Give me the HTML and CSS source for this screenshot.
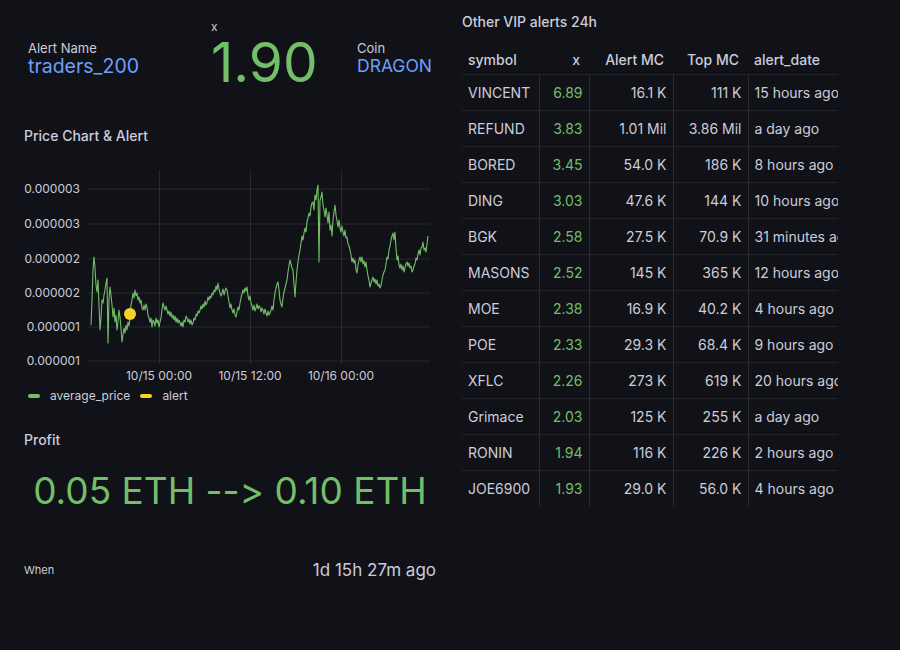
FILE: index.html
```html
<!DOCTYPE html>
<html>
<head>
<meta charset="utf-8">
<link rel="stylesheet" href="styles.css">
</head>
<body>
<div class="page">
  <div class="left">
    <div class="stats">
      <div class="stat stat-name">
        <div class="stat-label">Alert Name</div>
        <div class="stat-value blue">traders_200</div>
      </div>
      <div class="stat stat-x">
        <div class="stat-label small">x</div>
        <div class="stat-big">1.90</div>
      </div>
      <div class="stat stat-coin">
        <div class="stat-label">Coin</div>
        <div class="stat-value blue">DRAGON</div>
      </div>
    </div>

    <div class="panel chart-panel">
      <div class="panel-title">Price Chart &amp; Alert</div>
      <svg class="chart" width="412" height="220" viewBox="24 165 412 220">
        <g class="grid">
          <line x1="88" y1="189" x2="430" y2="189"/>
          <line x1="88" y1="224" x2="430" y2="224"/>
          <line x1="88" y1="259" x2="430" y2="259"/>
          <line x1="88" y1="293" x2="430" y2="293"/>
          <line x1="88" y1="327" x2="430" y2="327"/>
          <line x1="88" y1="361" x2="430" y2="361"/>
          <line x1="159.5" y1="170" x2="159.5" y2="364"/>
          <line x1="250.5" y1="170" x2="250.5" y2="364"/>
          <line x1="341.5" y1="170" x2="341.5" y2="364"/>
        </g>
        <g class="ylab">
          <text x="80" y="193">0.000003</text>
          <text x="80" y="228">0.000003</text>
          <text x="80" y="263">0.000002</text>
          <text x="80" y="297">0.000002</text>
          <text x="80" y="331">0.000001</text>
          <text x="80" y="365">0.000001</text>
        </g>
        <g class="xlab">
          <text x="159" y="380">10/15 00:00</text>
          <text x="250" y="380">10/15 12:00</text>
          <text x="341" y="380">10/16 00:00</text>
        </g>
        <polyline class="price" points="91,325 92,300 93,270 94,257 95,268 96,285 97,292 98,280 99,305 100,330 101,318 102,300 103,303 104,295 105,290 106,283 107,278 108,343 109,300 110,287 111,295 112,305 113,317 114,308 115,322 116,315 117,330 118,322 119,310 120,317 121,328 122,342 123,335 124,328 125,333 126,325 127,330 128,322 129,326 130,318 131,305 132,300 133,293 134,298 135,290 136,296 137,293 138,300 139,297 140,303 141,300 142,308 143,310 144,305 145,310 146,304 147,307 148,315 149,318 150,322 151,318 152,327 153,320 154,322 155,326 156,318 157,323 158,320 159,327 160,322 161,318 162,310 163,303 164,307 165,310 166,306 167,310 168,314 169,311 170,316 171,312 172,318 173,315 174,320 175,316 176,322 177,318 178,323 179,320 180,323 181,326 182,322 183,327 184,320 185,322 186,316 187,318 188,322 189,319 190,324 191,320 192,325 193,323 194,318 195,320 196,314 197,316 198,311 199,313 200,310 201,306 202,309 203,304 204,307 205,301 206,305 207,303 208,297 209,300 210,296 211,298 212,293 213,295 214,290 215,292 216,286 217,290 218,283 219,289 220,293 221,296 222,293 223,289 224,295 225,291 226,288 227,290 228,296 229,302 230,308 231,304 232,310 233,313 234,309 235,315 236,317 237,312 238,307 239,310 240,303 241,298 242,294 243,290 244,293 245,288 246,291 247,287 248,296 249,300 250,296 251,303 252,306 253,310 254,305 255,311 256,308 257,304 258,309 259,306 260,307 261,312 262,308 263,310 264,314 265,309 266,313 267,316 268,311 269,315 270,313 271,310 272,306 273,310 274,300 275,293 276,288 277,284 278,282 279,290 280,300 281,304 282,307 283,298 284,292 285,288 286,284 287,280 288,272 289,266 290,260 291,264 292,268 293,270 294,285 295,297 296,282 297,270 298,262 299,255 300,250 301,243 302,236 303,240 304,233 305,228 306,232 307,222 308,218 309,213 310,216 311,207 312,203 313,202 314,210 315,195 316,200 317,190 318,185 319,262 320,200 321,197 322,192 323,205 324,210 325,217 326,208 327,215 328,223 329,212 330,230 331,225 332,236 333,220 334,212 335,205 336,215 337,221 338,227 339,220 340,228 341,232 342,226 343,232 344,236 345,230 346,238 347,237 348,244 349,246 350,250 351,255 352,262 353,258 354,263 355,260 356,270 357,273 358,265 359,260 360,257 361,262 362,257 363,264 364,261 365,267 366,262 367,270 368,276 369,280 370,287 371,283 372,280 373,277 374,282 375,279 376,284 377,280 378,286 379,284 380,288 381,286 382,280 383,275 384,272 385,270 386,264 387,257 388,259 389,250 390,246 391,240 392,236 393,233 394,240 395,232 396,248 397,260 398,256 399,265 400,268 401,264 402,270 403,266 404,272 405,268 406,264 407,262 408,266 409,263 410,268 411,266 412,272 413,270 414,266 415,264 416,258 417,260 418,254 419,250 420,255 421,248 422,247 423,242 424,250 425,248 426,252 427,244 428,236"/>
        <circle class="alert-dot" cx="130" cy="314" r="6"/>
      </svg>
      <div class="legend">
        <span class="legend-item"><span class="swatch green"></span>average_price</span>
        <span class="legend-item"><span class="swatch yellow"></span>alert</span>
      </div>
    </div>

    <div class="panel profit-panel">
      <div class="panel-title">Profit</div>
      <div class="profit-value">0.05 ETH --&gt; 0.10 ETH</div>
    </div>

    <div class="when-row">
      <span class="when-label">When</span>
      <span class="when-value">1d 15h 27m ago</span>
    </div>
  </div>

  <div class="right">
    <div class="panel-title">Other VIP alerts 24h</div>
    <table class="alerts">
      <colgroup>
        <col class="c-sym"><col class="c-x"><col class="c-amc"><col class="c-tmc"><col class="c-date">
      </colgroup>
      <thead>
        <tr><th class="l">symbol</th><th class="r">x</th><th class="r">Alert MC</th><th class="r">Top MC</th><th class="l">alert_date</th></tr>
      </thead>
      <tbody>
        <tr><td>VINCENT</td><td class="r g">6.89</td><td class="r">16.1 K</td><td class="r">111 K</td><td class="d">15 hours ago</td></tr>
        <tr><td>REFUND</td><td class="r g">3.83</td><td class="r">1.01 Mil</td><td class="r">3.86 Mil</td><td class="d">a day ago</td></tr>
        <tr><td>BORED</td><td class="r g">3.45</td><td class="r">54.0 K</td><td class="r">186 K</td><td class="d">8 hours ago</td></tr>
        <tr><td>DING</td><td class="r g">3.03</td><td class="r">47.6 K</td><td class="r">144 K</td><td class="d">10 hours ago</td></tr>
        <tr><td>BGK</td><td class="r g">2.58</td><td class="r">27.5 K</td><td class="r">70.9 K</td><td class="d">31 minutes ago</td></tr>
        <tr><td>MASONS</td><td class="r g">2.52</td><td class="r">145 K</td><td class="r">365 K</td><td class="d">12 hours ago</td></tr>
        <tr><td>MOE</td><td class="r g">2.38</td><td class="r">16.9 K</td><td class="r">40.2 K</td><td class="d">4 hours ago</td></tr>
        <tr><td>POE</td><td class="r g">2.33</td><td class="r">29.3 K</td><td class="r">68.4 K</td><td class="d">9 hours ago</td></tr>
        <tr><td>XFLC</td><td class="r g">2.26</td><td class="r">273 K</td><td class="r">619 K</td><td class="d">20 hours ago</td></tr>
        <tr><td>Grimace</td><td class="r g">2.03</td><td class="r">125 K</td><td class="r">255 K</td><td class="d">a day ago</td></tr>
        <tr><td>RONIN</td><td class="r g">1.94</td><td class="r">116 K</td><td class="r">226 K</td><td class="d">2 hours ago</td></tr>
        <tr><td>JOE6900</td><td class="r g">1.93</td><td class="r">29.0 K</td><td class="r">56.0 K</td><td class="d">4 hours ago</td></tr>
      </tbody>
    </table>
  </div>
</div>
</body>
</html>
```
FILE: styles.css
```css
* { box-sizing: border-box; }
html, body {
  margin: 0;
  padding: 0;
  background: #111217;
  color: #ccccdc;
  font-family: Inter, "Noto Sans", sans-serif;
  font-feature-settings: "calt" 0;
}
body { width: 900px; height: 650px; overflow: hidden; }

.page { display: flex; }

.left {
  width: 462px;
  padding-left: 24px;
  padding-right: 26px;
}

.stats { display: flex; height: 110px; }
.stat-name { width: 187px; padding-left: 4px; padding-top: 41px; }
.stat-x { width: 146px; padding-top: 21px; }
.stat-coin { padding-top: 41px; }

.stat-label { font-size: 13px; line-height: 14px; }
.stat-label.small { font-size: 12px; line-height: 12px; margin-bottom: 2px; }
.stat-value { font-size: 19px; line-height: 22px; }
.stat-name .stat-value { font-size: 19.5px; }
.stat-coin .stat-value { font-size: 17.5px; }
.blue { color: #6e9fff; }
.stat-big {
  font-size: 55px;
  line-height: 55px;
  margin-top: 2px;
  color: #73bf69;
}

.panel-title { font-size: 14px; font-weight: 500; line-height: 20px; }

.chart-panel { padding-top: 16px; }
.chart-panel .panel-title { margin-bottom: 19px; }
.chart { display: block; }
.grid line { stroke: rgba(204, 204, 220, 0.12); stroke-width: 1; }
.ylab text { fill: #ccccdc; font-size: 12px; text-anchor: end; font-family: Inter, sans-serif; }
.xlab text { fill: #ccccdc; font-size: 12px; text-anchor: middle; font-family: Inter, sans-serif; }
.price { fill: none; stroke: #73bf69; stroke-width: 1.1; stroke-linejoin: round; }
.alert-dot { fill: #f5d327; }

.legend {
  display: flex;
  gap: 10px;
  margin-top: 3px;
  padding-left: 4px;
  font-size: 12px;
  line-height: 16px;
}
.legend-item { display: flex; align-items: center; }
.swatch { width: 12px; height: 4px; border-radius: 2px; margin-right: 10px; }
.swatch.green { background: #73bf69; }
.swatch.yellow { background: #f5d327; }

.profit-panel { padding-top: 26px; }
.profit-value {
  margin-top: 18px;
  text-align: center;
  font-size: 37px;
  line-height: 46px;
  color: #73bf69;
  white-space: nowrap;
}

.when-row {
  display: flex;
  justify-content: space-between;
  align-items: center;
  margin-top: 44px;
  height: 24px;
}
.when-label { font-size: 11px; }
.when-value { font-size: 17px; }

.right { padding-top: 12px; width: 376px; overflow: hidden; }
.right .panel-title { margin-bottom: 10px; }

.alerts {
  border-collapse: collapse;
  table-layout: fixed;
  width: 376px;
  font-size: 14px;
}
.c-sym { width: 77px; }
.c-x { width: 50px; }
.c-amc { width: 84px; }
.c-tmc { width: 75px; }
.c-date { width: 90px; }

.alerts th {
  height: 32px;
  font-weight: 500;
  padding: 4px 6px 0;
  border-bottom: 1px solid #24252b;
  white-space: nowrap;
}
.alerts th.l { text-align: left; }
.alerts th.r { text-align: right; padding-right: 9px; }
.alerts td {
  height: 36px;
  padding: 0 6px;
  border-bottom: 1px solid #24252b;
  border-right: 1px solid #2a2b31;
  white-space: nowrap;
  overflow: hidden;
}
.alerts tr:last-child td { border-bottom: none; }
.alerts td.d { border-right: none; text-overflow: clip; }
.alerts td.r { text-align: right; }
.alerts td.g { color: #73bf69; }
```
